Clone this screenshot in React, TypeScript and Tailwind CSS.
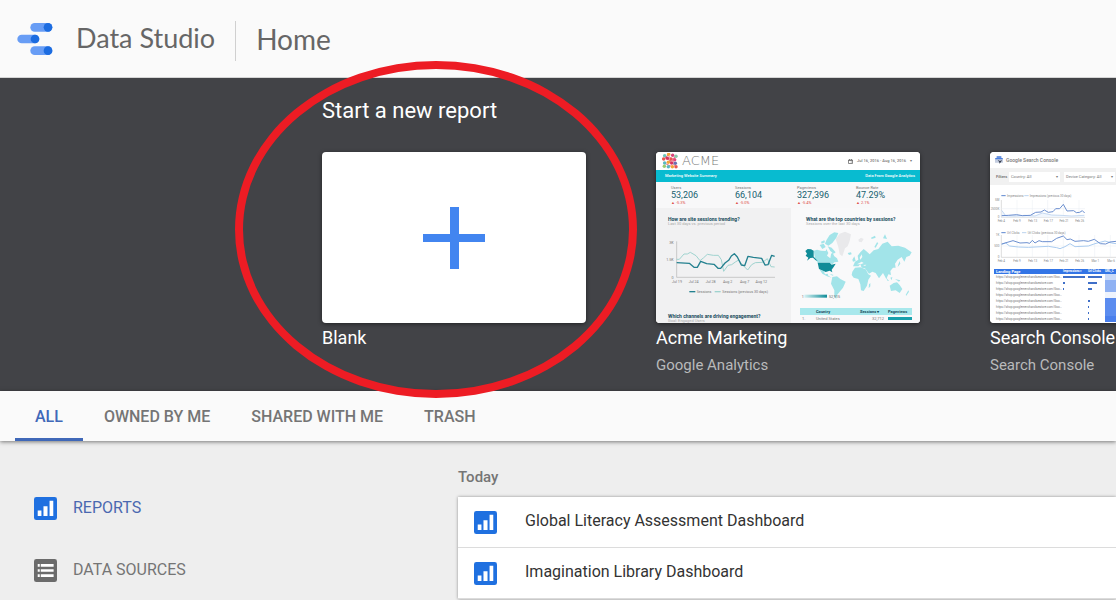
import type { ReactNode } from "react";

function Logo() {
  const pills = [
    { x: 92, y: 66 },
    { x: 53, y: 101 },
    { x: 92, y: 136 },
  ];
  return (
    <svg className="h-8 w-9 shrink-0" viewBox="52 66 108 96" aria-hidden="true">
      {pills.map((p) => (
        <g key={p.y}>
          <rect x={p.x} y={p.y} width="66" height="26" rx="13" fill="#689df5" />
          <circle cx={p.x + 53} cy={p.y + 13} r="13" fill="#1c6ce0" />
        </g>
      ))}
    </svg>
  );
}

function ReportIcon() {
  return (
    <svg className="size-[23px] shrink-0" viewBox="0 0 68 68" aria-hidden="true">
      <rect width="68" height="68" rx="7" fill="#1f70e0" />
      <path d="M11 40h11v16H11zM28 27h12v29H28zM46 11h11v45H46z" fill="#fff" />
    </svg>
  );
}

function SourceIcon() {
  return (
    <svg className="size-[23px] shrink-0" viewBox="0 0 68 68" aria-hidden="true">
      <rect width="68" height="68" rx="7" fill="#6b6b6b" />
      <path d="M11 15h6v8h-6zM20 15h38v8H20zM11 30h6v8h-6zM20 30h38v8H20zM11 45h6v8h-6zM20 45h38v8H20z" fill="#fff" />
    </svg>
  );
}

const acmeDots = [
  [8, 8, "#6cc5b8"], [20, 4, "#f2a33a"], [32, 7, "#d8457a"], [42, 10, "#8ac7a8"],
  [5, 18, "#e8584f"], [16, 16, "#d8345f"], [27, 18, "#e8584f"], [38, 20, "#e5457a"],
  [8, 30, "#5ab7c4"], [19, 28, "#f2a33a"], [29, 30, "#d8345f"], [40, 31, "#6b6fb0"],
  [7, 40, "#9acb74"], [19, 41, "#5ab7c4"], [31, 41, "#f2a33a"], [42, 41, "#e8584f"],
] as const;

function AcmeLogo() {
  return (
    <svg className="size-4" viewBox="0 0 48 48" aria-hidden="true">
      <path d="M8 8L42 41M16 4L38 31M6 30L30 41M20 4L6 18M42 10L19 28" stroke="#e8768a" strokeWidth="3" />
      {acmeDots.map(([x, y, c]) => (
        <circle key={`${x}-${y}`} cx={x} cy={y} r="5.2" fill={c} />
      ))}
    </svg>
  );
}

const metrics = [
  { label: "Users", value: "53,206", delta: "▲ -5.3%", width: "w-16" },
  { label: "Sessions", value: "66,104", delta: "▲ -5.0%", width: "w-[62px]" },
  { label: "Pageviews", value: "327,396", delta: "▲ -5.4%", width: "w-[59px]" },
  { label: "Bounce Rate", value: "47.29%", delta: "▲ 2.1%", width: "w-14" },
];

function SessionsChart() {
  const ticks = [
    [81, "Jul 19"], [131, "Jul 24"], [182, "Jul 28"], [233, "Aug 2"], [284, "Aug 7"], [334, "Aug 12"],
  ] as const;
  return (
    <svg className="h-[87px] w-full" viewBox="18 -18 405 261" fill="none" fontSize="11" fontFamily="Roboto, sans-serif">
      <path d="M80 28V136H375" stroke="#b4b4b4" strokeWidth="2" />
      <path d="M80 82H88L102 66H112L121 61L138 71L150 86L160 78L172 67L190 70H205L214 83L221 118L234 100L245 98L256 90L266 84L276 97L293 114L305 98L316 92L338 91L352 80L363 104L374 105" stroke="#9fd3cf" strokeWidth="3" strokeLinejoin="round" />
      <path d="M80 92L118 94L132 106H142L152 88L170 95L192 97L204 109H212L225 93L236 85L244 72L253 65L262 75L274 99L284 101L294 73L310 76L335 79L345 99L354 98L365 70L374 73" stroke="#23808f" strokeWidth="4" strokeLinejoin="round" />
      <g fill="#777" textAnchor="end">
        <text x="71" y="35">3K</text>
        <text x="71" y="88">1.5K</text>
        <text x="71" y="141">0</text>
      </g>
      <g fill="#777" textAnchor="middle">
        {ticks.map(([x, t]) => (
          <text key={t} x={x} y="153">{t}</text>
        ))}
      </g>
      <path d="M118 179H136" stroke="#23808f" strokeWidth="4" />
      <path d="M194 179H212" stroke="#9fd3cf" strokeWidth="4" />
      <g fill="#777">
        <text x="140" y="183">Sessions</text>
        <text x="217" y="183">Sessions (previous 30 days)</text>
      </g>
    </svg>
  );
}

function CountryMap() {
  return (
    <svg className="h-[82px] w-full" viewBox="-12 3 387 246" fontSize="11" fontFamily="Roboto, sans-serif">
      <defs>
        <linearGradient id="scale">
          <stop offset="0" stopColor="#d5f1f2" />
          <stop offset="1" stopColor="#108c98" />
        </linearGradient>
      </defs>
      <g fill="#e9e9eb">
        <path d="M122 42L134 26L150 20L168 28L164 48L158 64L150 70L142 94L134 88L130 66Z" />
        <path d="M190 44L198 38L206 42L200 52L192 50Z" />
      </g>
      <g fill="#a2e4e9">
        <path d="M56 77L66 74L78 77L92 78L94 72L100 84L96 92L106 100L108 88L112 82L118 94L126 100L130 110L118 112L112 118L104 113H68L60 100Z" />
        <path d="M74 60L86 56L92 66L82 72ZM90 56L94 46L104 30L118 22L130 24L124 38L112 54L100 62ZM98 64L110 68L122 82L116 86L106 78ZM78 50L88 46L90 52L80 56Z" />
        <path d="M74 134L86 138L90 148L98 146L100 152L110 158L96 154L82 146ZM104 146L116 150L112 152Z" />
        <path d="M112 156L126 154L136 162L152 170L144 188L134 200L126 210L124 221L118 216V196L108 176Z" />
        <path d="M172 140L180 128L196 127L212 133L220 148L228 152L220 164L216 182L206 198L198 196L196 178L190 162L176 158L170 150Z" />
        <path d="M222 178L226 174L226 184L221 190ZM158 84L168 82L170 88L162 90ZM172 104L178 94L182 108L174 110ZM228 38L240 32L242 38L230 42ZM238 66L246 52L250 54L242 68ZM264 40L270 28L276 42Z" />
        <path d="M174 124L180 110L190 104L188 92L196 82L206 72L216 80L224 88L236 76L250 72L262 56L278 50L290 64L310 62L330 68L350 82L344 92L334 96L328 110L320 96L308 104L300 116L302 128L294 128L286 138L288 150L280 148L274 162L264 144L252 160L242 144L232 140L222 146L210 130L200 128L196 118L190 124Z" />
        <path d="M284 182L296 174L306 172L314 180L322 192L314 204L302 196L288 198ZM272 156L282 168L278 168ZM286 158L292 156L290 166ZM300 162L316 166L312 170ZM310 118L314 108L316 116L308 126ZM332 210L340 196L342 200L334 212Z" />
      </g>
      <path d="M186 118L200 110L206 114L198 118ZM204 120L214 119L210 123ZM194 98L200 88L202 96L196 104Z" fill="#f7f8f8" />
      <g fill="#108c98">
        <path d="M31 78L38 72L48 73L56 77V95L68 108L62 106L54 98L46 99L36 107L40 98L32 92L36 86Z" />
        <path d="M68 113H104L110 119L122 116L116 126L110 134L112 142L104 137L92 141L86 138L72 132Z" />
        <rect x="28" y="209" width="68" height="9" fill="url(#scale)" />
      </g>
      <g fill="#666">
        <text x="20" y="218">1</text>
        <text x="102" y="218">52,915</text>
      </g>
    </svg>
  );
}

function AcmeThumbnail() {
  return (
    <div className="flex h-full flex-col bg-[#f5f5f6] text-[#777]">
      <div className="flex h-[18px] shrink-0 items-center justify-between bg-white pr-2 pl-1.5">
        <div className="flex items-center gap-1">
          <AcmeLogo />
          <span className="font-['DejaVu_Sans',sans-serif] text-[13px] leading-4 font-extralight text-[#777]">ACME</span>
        </div>
        <div className="flex items-center gap-1 text-[4px] leading-[6px] font-medium">
          <svg className="size-[5px]" viewBox="0 0 10 10" aria-hidden="true">
            <path d="M1 2H9V9H1ZM1 3H9M3 0V2M7 0V2M5.500 6H7.500" fill="none" stroke="#666" strokeWidth="1.500" />
          </svg>
          <span>Jul 16, 2016 - Aug 16, 2016</span>
          <span>▾</span>
        </div>
      </div>
      <div className="flex h-3 shrink-0 items-center justify-between bg-[#08bbd0] pr-[5px] pl-[9px] text-[4px] leading-[6px] font-medium text-white">
        <span>Marketing Website Summary</span>
        <span>Data From Google Analytics</span>
      </div>
      <div className="flex h-[26px] shrink-0 bg-[#f8f8f9] pt-[3px] pl-[15px]">
        {metrics.map((m) => (
          <div key={m.label} className={`shrink-0 ${m.width}`}>
            <div className="text-[4px] leading-[5px]">{m.label}</div>
            <div className="text-[9px] leading-[10px] text-[#176170]">{m.value}</div>
            <div className="text-[4px] leading-[6px] text-[#e05050]">{m.delta}</div>
          </div>
        ))}
      </div>
      <div className="grid flex-1 grid-cols-[135fr_129fr] bg-[#f1f1f2]">
        <div>
          <div className="px-3 pt-2">
            <div className="text-[5px] leading-[6px] font-bold text-[#174b5c]">How are site sessions trending?</div>
            <div className="text-[4px] leading-[4px] text-[#aaa]">Last 30 days vs. previous period</div>
          </div>
          <SessionsChart />
          <div className="px-3">
            <div className="text-[5px] leading-[6px] font-bold text-[#174b5c]">Which channels are driving engagement?</div>
            <div className="text-[4px] leading-[4px] text-[#aaa]">Goal: Engaged Users</div>
          </div>
        </div>
        <div className="bg-[#f9f9fa]">
          <div className="pt-2 pl-[15px]">
            <div className="text-[5px] leading-[6px] font-bold text-[#174b5c]">What are the top countries by sessions?</div>
            <div className="text-[4px] leading-[4px] text-[#aaa]">Sessions over the last 30 days</div>
          </div>
          <CountryMap />
          <div className="pr-2 pl-[9px]">
            <table className="w-full table-fixed text-[4px] leading-[7px]">
              <thead className="bg-[#a8e8ec] text-[#174b5c]">
                <tr>
                  <th className="w-4" />
                  <th className="text-left font-bold">Country</th>
                  <th className="w-7 text-left font-bold">Sessions ▾</th>
                  <th className="w-6 text-left font-bold">Pageviews</th>
                </tr>
              </thead>
              <tbody>
                <tr>
                  <td className="pl-0.5">1.</td>
                  <td>United States</td>
                  <td className="pr-1 text-right">32,712</td>
                  <td><div className="h-[3px] bg-[#18a0ac]" /></td>
                </tr>
              </tbody>
            </table>
          </div>
        </div>
      </div>
    </div>
  );
}

const landingRows = [
  { url: "https://shop.googlemerchandisestore.com/Goo…", a: 22, b: 14, tone: "bg-[#c9d9f8]" },
  { url: "https://shop.googlemerchandisestore.com", a: 2, b: 9, tone: "bg-[#8fb1f3]" },
  { url: "https://shop.googlemerchandisestore.com/Goo…", a: 1, b: 4, tone: "bg-[#8fb1f3]" },
  { url: "https://shop.googlemerchandisestore.com/Goo…", a: 0, b: 0, tone: "bg-[#eef3fd]" },
  { url: "https://shop.googlemerchandisestore.com/Goo…", a: 0, b: 2, tone: "bg-[#5b8cef]" },
  { url: "https://shop.googlemerchandisestore.com/Goo…", a: 0, b: 1, tone: "bg-[#5b8cef]" },
  { url: "https://shop.googlemerchandisestore.com/Goo…", a: 0, b: 1, tone: "bg-[#5b8cef]" },
  { url: "https://shop.googlemerchandisestore.com/Goo…", a: 0, b: 1, tone: "bg-[#4a7fec]" },
];

function SearchCharts() {
  const dates = ["Feb 4", "Feb 9", "Feb 13", "Feb 17", "Feb 21", "Feb 26", "Mar 1", "Mar 6"];
  return (
    <svg className="h-[84px] w-full shrink-0" viewBox="15 120 792 252" fill="none" fontSize="9" fontFamily="Roboto, sans-serif">
      <path d="M49 165V217H300M49 270V337H640" stroke="#bbb" strokeWidth="1.500" />
      <path d="M96 165V217M142 165V217M188 165V217M235 165V217M282 165V217M96 270V337M142 270V337M188 270V337M235 270V337M282 270V337M329 270V337M376 270V337M49 191H300M49 303H640" stroke="#e9edf3" strokeWidth="1.500" />
      <path d="M50 196L62 212L90 213L120 211L150 213L172 204L200 210L228 211L260 213L298 211V217H50Z" fill="#f0f6fd" />
      <path d="M50 196L62 212L90 213L120 211L150 213L172 204L200 210L228 211L260 213L298 211" stroke="#bcd3ee" strokeWidth="2.500" />
      <path d="M50 212L70 211L95 209L112 212L136 211L152 202L168 201L178 195L190 202L204 200L212 191L224 191L235 178L246 198L266 197L274 203L284 202L292 197L299 204" stroke="#6c8fcf" strokeWidth="3" strokeLinejoin="round" />
      <path d="M50 298L62 294L74 303L100 306L130 307L190 304L215 308L225 311L240 305L255 296L270 305L310 303L330 296L360 288L380 294L420 300" stroke="#aacbef" strokeWidth="3" />
      <path d="M50 297L84 287L105 294L126 293L134 295L142 286L150 294L162 287L172 290L200 290L215 280L235 273L246 284L256 282L270 289L296 287L310 289L328 283L346 296L362 297L375 291L420 286" stroke="#6c8fcf" strokeWidth="3" strokeLinejoin="round" />
      <path d="M49 152H62M49 263H62" stroke="#5c86cf" strokeWidth="3" />
      <path d="M118 152H131M111 263H124" stroke="#bcd3ee" strokeWidth="3" />
      <g fill="#888">
        <text x="66" y="155">Impressions</text>
        <text x="134" y="155">Impressions (previous 30 days)</text>
        <text x="66" y="266">Url Clicks</text>
        <text x="128" y="266">Url Clicks (previous 30 days)</text>
        <g textAnchor="end">
          <text x="43" y="169">5M</text>
          <text x="43" y="194">2500K</text>
          <text x="43" y="219">0</text>
          <text x="43" y="274">1K</text>
          <text x="43" y="306">500</text>
          <text x="43" y="340">0</text>
        </g>
        <g textAnchor="middle">
          {dates.slice(0, 6).map((d, i) => (
            <text key={d} x={49 + i * 47} y="230">{d}</text>
          ))}
          {dates.map((d, i) => (
            <text key={d} x={49 + i * 47} y="350">{d}</text>
          ))}
        </g>
      </g>
    </svg>
  );
}

function SearchThumbnail() {
  return (
    <div className="flex h-full flex-col bg-white text-[#777]">
      <div className="flex h-4 shrink-0 items-center gap-[3px] pl-[5px]">
        <svg className="size-2" viewBox="0 0 24 24" aria-hidden="true">
          <path d="M5 2H19V6H24V20H0V6H5Z" fill="#c4cde0" />
          <path d="M5 1H19V5H5ZM1 6H23V10H1Z" fill="#4a7fe0" />
          <path d="M8 12L13 18V23L18 18L21 12L15 15Z" fill="#333a4a" />
        </svg>
        <span className="text-[5px] leading-2 font-medium">Google Search Console</span>
      </div>
      <div className="flex h-[17px] shrink-0 items-center gap-1 bg-[#f1f1f1] pl-1.5 text-[4px] leading-[6px]">
        <span className="w-[9px] shrink-0 font-bold">Filters</span>
        <div className="flex h-2.5 w-[51px] items-center justify-between bg-white px-0.5">
          <span>Country: All</span>
          <span>▾</span>
        </div>
        <div className="flex h-2.5 w-[51px] items-center justify-between bg-white px-0.5">
          <span>Device Category: All</span>
          <span>▾</span>
        </div>
      </div>
      <SearchCharts />
      <div className="pl-1">
        <table className="w-full table-fixed border-collapse text-[3px] leading-[5px] whitespace-nowrap">
          <thead className="bg-[#3375e6] text-white">
            <tr>
              <th className="w-[69px] px-0.5 text-left text-[4px] font-bold">Landing Page</th>
              <th className="w-[25px] text-left font-bold">Impressions ▾</th>
              <th className="w-[17px] text-left font-bold">Url Clicks</th>
              <th className="text-left font-bold">URL_C</th>
            </tr>
          </thead>
          <tbody>
            {landingRows.map((r, i) => (
              <tr key={i} className="h-[6px] leading-[6px]">
                <td className="px-0.5">{r.url}</td>
                <td><div className="h-0.5 bg-[#3f6fc8]" style={{ width: r.a }} /></td>
                <td><div className="h-0.5 bg-[#3f6fc8]" style={{ width: r.b }} /></td>
                <td className={r.tone} />
              </tr>
            ))}
          </tbody>
        </table>
      </div>
    </div>
  );
}

function Template({ title, source, children }: { title: string; source?: string; children: ReactNode }) {
  return (
    <button type="button" className="flex w-66 shrink-0 flex-col items-start text-left">
      <div className="h-[171px] w-full overflow-hidden rounded-[4px] bg-white shadow-[0_1px_4px_rgba(0,0,0,0.5)]">{children}</div>
      <span className="mt-[3px] text-[18px] leading-6 text-white">{title}</span>
      {source && <span className="mt-[3px] text-[15px] leading-6 text-[#b9babb]">{source}</span>}
    </button>
  );
}

const tabs = ["ALL", "OWNED BY ME", "SHARED WITH ME", "TRASH"];
const reports = ["Global Literacy Assessment Dashboard", "Imagination Library Dashboard"];

export default function App() {
  return (
    <div className="min-h-screen overflow-hidden bg-[#eeeeee] font-[Roboto,sans-serif]">
      <header className="flex h-[78px] items-center border-b border-[#d5d5d5] bg-[#fafafa] pl-[17px] font-[Lato,sans-serif] text-[#666]">
        <Logo />
        <span className="ml-[23px] text-[27px]">Data Studio</span>
        <div className="mx-5 mt-1 h-10 w-px bg-[#d0d0d0]" />
        <h1 className="text-[28px]">Home</h1>
      </header>

      <section className="relative h-[313px] bg-[#424347]">
        <div className="overflow-hidden pt-[19px] pl-[322px]">
          <h2 className="text-[22px] leading-7 text-white">Start a new report</h2>
          <div className="-mx-2 mt-[27px] flex gap-[70px] px-2 pb-4">
            <Template title="Blank">
              <div className="flex h-full items-center justify-center">
                <svg className="size-[62px]" viewBox="0 0 62 62" aria-hidden="true">
                  <path d="M27 0H36V27H62V35H36V62H27V35H0V27H27Z" fill="#4285f0" />
                </svg>
              </div>
            </Template>
            <Template title="Acme Marketing" source="Google Analytics">
              <AcmeThumbnail />
            </Template>
            <Template title="Search Console" source="Search Console">
              <SearchThumbnail />
            </Template>
          </div>
        </div>
        <div className="pointer-events-none absolute -top-[17px] left-[235px] z-20 h-[337px] w-[402px] rounded-[50%] border-8 border-[#ed1c24]" />
      </section>

      <nav className="relative z-10 flex h-[50px] gap-px bg-[#fafafa] pl-[15px] text-[16px] font-medium text-[#757575] shadow-[0_1px_4px_rgba(0,0,0,0.5)]">
        {tabs.map((t, i) => (
          <button
            key={t}
            type="button"
            className={`border-b-3 px-5 pt-1 ${i === 0 ? "border-[#4068b8] text-[#4068b8]" : "border-transparent"}`}
          >
            {t}
          </button>
        ))}
      </nav>

      <div className="flex">
        <aside className="flex w-[458px] shrink-0 flex-col gap-[38px] pt-[55px] pl-[34px] text-[16px] leading-6">
          <a href="#reports" className="flex items-center gap-4 text-[#4a68b0]">
            <ReportIcon />
            REPORTS
          </a>
          <a href="#sources" className="flex items-center gap-4 text-[#757575]">
            <SourceIcon />
            DATA SOURCES
          </a>
        </aside>
        <main className="min-w-0 flex-1 pt-6">
          <h3 className="text-[15px] leading-6 font-medium text-[#757575]">Today</h3>
          <ul className="mt-2 bg-white shadow-[0_0_3px_rgba(0,0,0,0.4)]">
            {reports.map((r) => (
              <li key={r} className="border-b border-[#dcdcdc]">
                <a href="#report" className="flex h-[50px] items-center gap-7 pl-4 text-[16px] text-[#333]">
                  <ReportIcon />
                  <span className="pb-0.5">{r}</span>
                </a>
              </li>
            ))}
          </ul>
        </main>
      </div>
    </div>
  );
}
